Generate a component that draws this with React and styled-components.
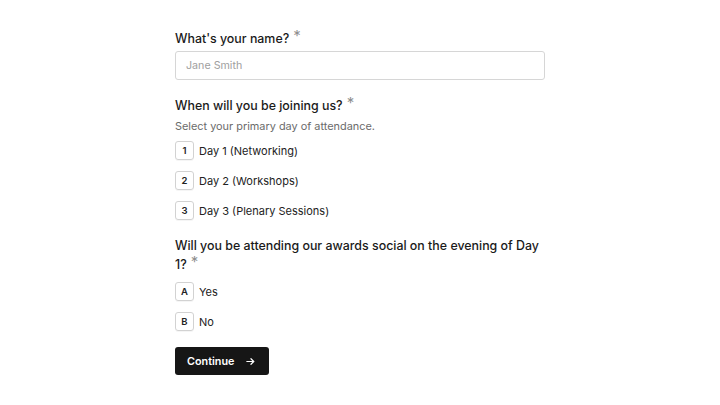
import React from "react";
import styled, { createGlobalStyle } from "styled-components";

const Global = createGlobalStyle`
  html, body { margin: 0; padding: 0; background: #fff; }
  body { font-family: Inter, "Noto Sans", sans-serif; color: #1c1c1c; -webkit-font-smoothing: antialiased; }
  * { box-sizing: border-box; }
`;

const Page = styled.div`
  width: 720px;
  height: 405px;
  display: flex;
  justify-content: center;
  padding-top: 29px;
`;

const Form = styled.form`
  width: 370px;
  display: flex;
  flex-direction: column;
`;

const Question = styled.div`
  display: flex;
  flex-direction: column;
  margin-bottom: ${(p) => p.$mb || 0}px;
`;

const Label = styled.div`
  font-size: 12.4px;
  font-weight: 500;
  line-height: 19px;
  color: #1a1a1a;
`;

const Star = styled.span`
  color: #8f8f8f;
  font-size: 15px;
  line-height: 1;
  font-weight: 400;
  position: relative;
  top: -2px;
  margin-left: 4px;
`;

const Input = styled.input`
  margin-top: 3px;
  width: 100%;
  height: 29px;
  border: 1px solid #d6d6d6;
  border-radius: 3px;
  padding: 0 10px;
  font-family: inherit;
  font-size: 10.7px;
  color: #222;
  outline: none;
  &::placeholder { color: #a0a0a0; }
`;

const Desc = styled.div`
  font-size: 10.9px;
  color: #6b6b6b;
  line-height: 17px;
  margin-top: 3px;
`;

const Options = styled.div`
  display: flex;
  flex-direction: column;
  gap: 11px;
  margin-top: ${(p) => p.$mt}px;
`;

const Option = styled.label`
  display: flex;
  align-items: center;
  gap: 5px;
  height: 19px;
  font-size: 11px;
  color: #222;
  cursor: pointer;
`;

const Key = styled.span`
  width: 19px;
  height: 19px;
  border: 1px solid #d2d2d2;
  border-radius: 3px;
  display: flex;
  align-items: center;
  justify-content: center;
  font-size: 9.5px;
  font-weight: 600;
  color: #222;
  box-shadow: 0 1px 0 rgba(0,0,0,0.04);
`;

const Button = styled.button`
  align-self: flex-start;
  margin-top: 16px;
  height: 28px;
  width: 94px;
  background: #161616;
  color: #fff;
  border: none;
  border-radius: 3px;
  font-family: inherit;
  font-size: 10.8px;
  font-weight: 600;
  display: flex;
  align-items: center;
  padding: 0 0 0 12px;
  gap: 11px;
  cursor: pointer;
`;

const Arrow = () => (
  <svg width="11" height="11" viewBox="0 0 24 24" fill="none" stroke="#fff" strokeWidth="2.6" strokeLinecap="round" strokeLinejoin="round">
    <path d="M4 12h15" />
    <path d="M13 6l6 6-6 6" />
  </svg>
);

export default function App() {
  return (
    <Page>
      <Global />
      <Form onSubmit={(e) => e.preventDefault()}>
        <Question $mb={16}>
          <Label>What's your name?<Star>*</Star></Label>
          <Input placeholder="Jane Smith" />
        </Question>
        <Question $mb={16}>
          <Label>When will you be joining us?<Star>*</Star></Label>
          <Desc>Select your primary day of attendance.</Desc>
          <Options $mt={6}>
            <Option><Key>1</Key>Day 1 (Networking)</Option>
            <Option><Key>2</Key>Day 2 (Workshops)</Option>
            <Option><Key>3</Key>Day 3 (Plenary Sessions)</Option>
          </Options>
        </Question>
        <Question>
          <Label>Will you be attending our awards social on the evening of Day 1?<Star>*</Star></Label>
          <Options $mt={8}>
            <Option><Key>A</Key>Yes</Option>
            <Option><Key>B</Key>No</Option>
          </Options>
        </Question>
        <Button type="submit">Continue<Arrow /></Button>
      </Form>
    </Page>
  );
}
